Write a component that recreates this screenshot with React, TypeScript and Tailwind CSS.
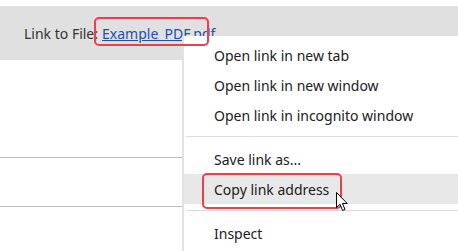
const font = { fontFamily: '"Noto Sans", "Open Sans", Arial, sans-serif' };

function Cursor() {
  return (
    <svg width="13" height="20" viewBox="0 0 13 20" className="absolute left-[336px] top-[192px]">
      <path
        d="M0.5 0.5 L0.5 15.5 L4 12.2 L6.6 18.5 L9 17.5 L6.5 11.5 L11.2 11.5 Z"
        fill="#fff"
        stroke="#000"
        strokeWidth="1"
        strokeLinejoin="round"
      />
    </svg>
  );
}

export default function App() {
  return (
    <div className="relative w-[458px] h-[251px] overflow-hidden bg-white" style={font}>
      {/* page behind the menu */}
      <div className="pt-[6px]">
        <div className="h-[54px] bg-[#e0e0e0] flex items-center pl-[24px] text-[14px] text-[#333]">
          <span>Link to File:</span>
          <a className="ml-[4px] text-[#1d4fb0] underline">Example_PDF.pdf</a>
        </div>
        <div className="h-[98px] border-b border-[#bdbdbd]" />
        <div className="h-[49px] border-b border-[#bdbdbd]" />
      </div>

      {/* context menu */}
      <div className="absolute left-[182px] top-[36px] w-[276px] h-[230px] bg-white border-l-2 border-[#e2e2e2] text-[14px] text-[#202020]">
        <div className="pt-[4px] flex flex-col">
          <div className="h-[30px] flex items-center pl-[30px] pt-px">Open link in new tab</div>
          <div className="h-[30px] flex items-center pl-[30px] pt-px">Open link in new window</div>
          <div className="h-[30px] flex items-center pl-[30px] pt-px">Open link in incognito window</div>
          <div className="h-[14px] pt-[6px] pl-[2px]">
            <div className="h-px bg-[#dcdcdc]" />
          </div>
          <div className="h-[30px] flex items-center pl-[30px] pt-px">Save link as...</div>
          <div className="h-[30px] flex items-center pl-[30px] pt-px bg-[#e8e8e8]">Copy link address</div>
          <div className="h-[14px] pt-[6px] pl-[2px]">
            <div className="h-px bg-[#dcdcdc]" />
          </div>
          <div className="h-[30px] flex items-center pl-[30px] pt-px">Inspect</div>
        </div>
      </div>

      {/* highlight boxes */}
      <div className="absolute left-[94px] top-[17px] w-[115px] h-[29px] border-2 border-[#ec3f4b] rounded-[5px]" />
      <div className="absolute left-[202px] top-[173px] w-[140px] h-[36px] border-2 border-[#ec3f4b] rounded-[5px]" />

      <Cursor />
    </div>
  );
}
